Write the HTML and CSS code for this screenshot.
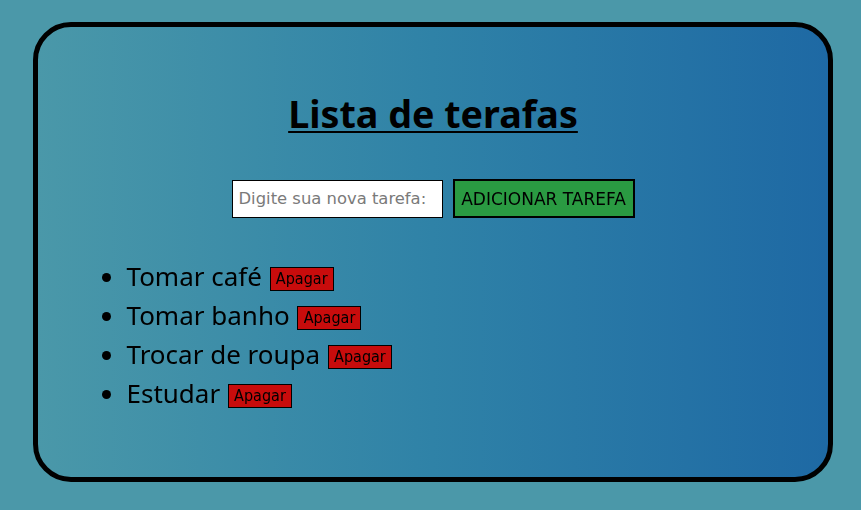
FILE: index.html
```html
<!DOCTYPE html>
<html lang="pt">
<head>
<meta charset="utf-8">
<title>Lista de terafas</title>
<link rel="stylesheet" href="styles.css">
</head>
<body>
<main class="card">
  <h1 class="title">Lista de terafas</h1>
  <div class="add-row">
    <input class="task-input" type="text" placeholder="Digite sua nova tarefa:" autofocus>
    <button class="add-btn">ADICIONAR TAREFA</button>
  </div>
  <ul class="tasks">
    <li class="task">Tomar café <button class="del-btn">Apagar</button></li>
    <li class="task">Tomar banho <button class="del-btn">Apagar</button></li>
    <li class="task">Trocar de roupa <button class="del-btn">Apagar</button></li>
    <li class="task">Estudar <button class="del-btn">Apagar</button></li>
  </ul>
</main>
</body>
</html>
```

FILE: styles.css
```css
html, body {
  margin: 0;
  padding: 0;
}
body {
  background: #4b98a9;
  font-family: "Noto Sans", "Open Sans", sans-serif;
  padding: 22px 0 0 33px;
  height: 510px;
  box-sizing: border-box;
  overflow: hidden;
}
.card {
  box-sizing: border-box;
  width: 800px;
  height: 460px;
  border: 5px solid #000;
  border-radius: 38px;
  background: linear-gradient(to right, #4a98a9 0%, #2f82a7 50%, #1e69a4 100%);
  padding: 62px 0 0 0;
  display: flex;
  flex-direction: column;
}
.title {
  margin: 0;
  font-size: 37.7px;
  font-weight: 700;
  line-height: 49px;
  text-align: center;
  text-decoration: underline;
  text-decoration-thickness: 2px;
  text-underline-offset: 3px;
  color: #000;
}
.add-row {
  margin-top: 41px;
  display: flex;
  justify-content: center;
  align-items: center;
  gap: 10px;
}
.task-input {
  box-sizing: border-box;
  width: 211px;
  height: 38px;
  border: 1px solid #000;
  background: #fff;
  padding: 0 6px;
  font-family: "DejaVu Sans", sans-serif;
  font-size: 16.4px;
  color: #000;
  outline: none;
  margin: 0;
}
.task-input::placeholder {
  color: #7a7a7a;
}
.add-btn {
  box-sizing: border-box;
  width: 182px;
  height: 39px;
  border: 2px solid #000;
  background: #2a9a42;
  color: #000;
  font-family: "DejaVu Sans", sans-serif;
  font-size: 17px;
  padding: 0;
  margin: 0;
}
.tasks {
  margin: 39px 0 0 48.5px;
  padding: 0 0 0 40px;
  font-size: 26px;
  line-height: 39px;
  color: #000;
}
.task {
  margin: 0;
}
.del-btn {
  box-sizing: border-box;
  height: 24px;
  width: 64px;
  border: 1px solid #000;
  background: #c80c0c;
  color: #000;
  font-family: "DejaVu Sans Condensed", "DejaVu Sans", sans-serif;
  font-size: 16px;
  padding: 0;
  margin: 0 0 0 1px;
  line-height: 22px;
  vertical-align: 2px;
}
```
